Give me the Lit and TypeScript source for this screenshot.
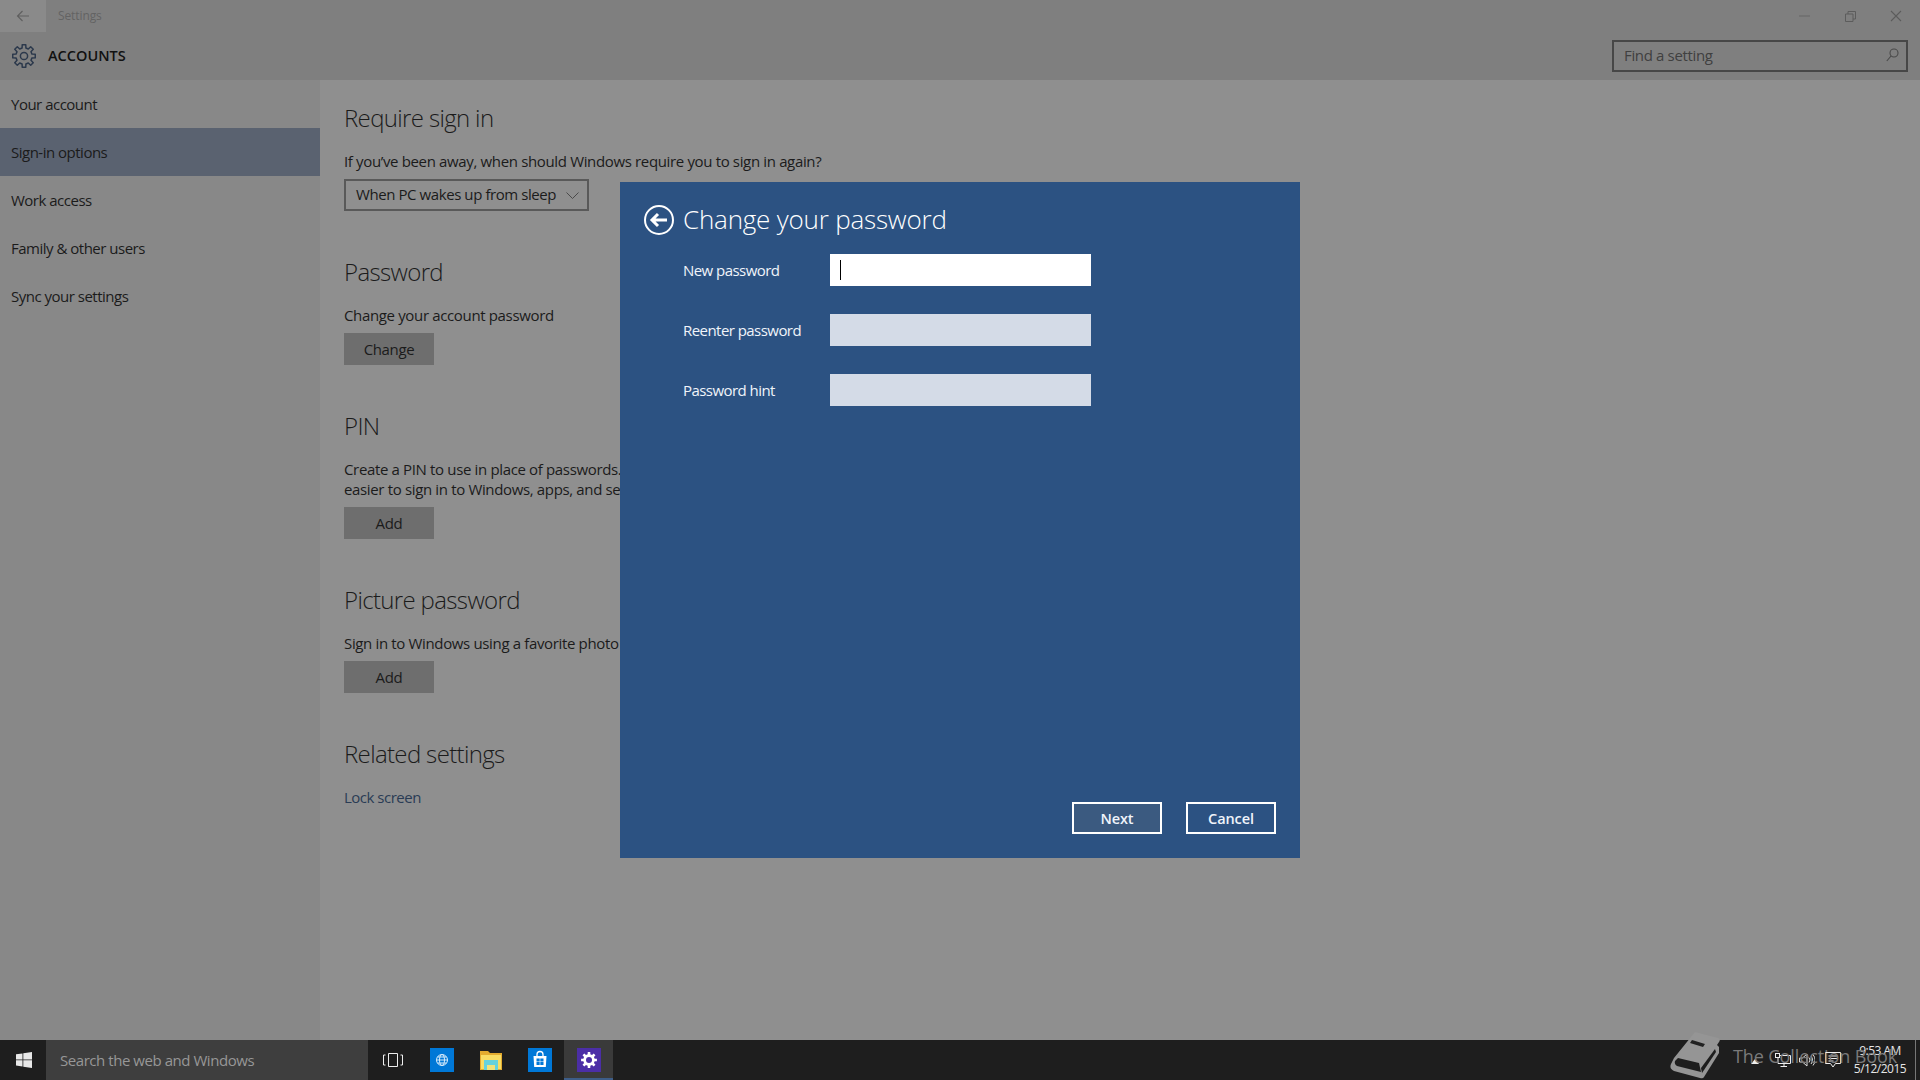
import { LitElement, html, css, svg } from 'lit';
import { customElement } from 'lit/decorators.js';

// builds a toothed gear outline around 12,12
function gearPath(teeth: number, outer: number, inner: number, size = 12) {
  const pts: string[] = [];
  const step = (Math.PI * 2) / teeth;
  for (let i = 0; i < teeth; i++) {
    const a = i * step - Math.PI / 2;
    const add = (r: number, t: number) => {
      pts.push(`${(size + r * Math.cos(a + t * step)).toFixed(2)} ${(size + r * Math.sin(a + t * step)).toFixed(2)}`);
    };
    add(inner, -0.3);
    add(outer, -0.2);
    add(outer, 0.2);
    add(inner, 0.3);
  }
  return `M${pts.join('L')}Z`;
}

const sideItems = ['Your account', 'Sign-in options', 'Work access', 'Family & other users', 'Sync your settings'];

@customElement('app-root')
export class AppRoot extends LitElement {
  static styles = css`
    :host {
      display: flex;
      flex-direction: column;
      position: relative;
      width: 1920px;
      height: 1080px;
      overflow: hidden;
      font-family: 'Open Sans', 'Noto Sans', sans-serif;
      font-size: 15px;
      letter-spacing: -0.35px;
      color: #1b1b1b;
      background: #8f8f8f;
    }
    svg { display: block; flex: none; }

    .titlebar {
      display: flex;
      align-items: center;
      height: 32px;
      background: #7f7f7f;
    }
    .back {
      display: flex;
      align-items: center;
      justify-content: center;
      width: 46px;
      height: 32px;
      background: #8a8a8a;
    }
    .app-title { margin-left: 12px; padding-bottom: 1px; font-size: 12px; color: #636363; letter-spacing: -0.1px; }
    .win-controls { display: flex; margin-left: auto; margin-right: 1px; }
    .win-controls div { display: flex; align-items: center; justify-content: center; width: 46px; height: 32px; }

    .header {
      display: flex;
      align-items: center;
      height: 48px;
      padding: 0 12px;
      background: #7f7f7f;
    }
    .section-name { margin-left: 12px; padding-bottom: 1px; color: #111; font-weight: 600; font-size: 14.5px; letter-spacing: 0; }
    .search {
      display: flex;
      align-items: center;
      justify-content: space-between;
      box-sizing: border-box;
      width: 296px;
      height: 32px;
      margin-left: auto;
      padding: 0 7px 2px 10px;
      border: 2px solid #474747;
      color: #404040;
    }

    .main { display: flex; flex: 1; min-height: 0; }
    .sidebar { width: 320px; background: #888888; letter-spacing: -0.5px; }
    .side-item {
      display: flex;
      align-items: center;
      height: 48px;
      padding-left: 11px;
    }
    .side-item.active { background: #5a6270; }

    .content { flex: 1; padding: 19px 0 0 24px; }
    .block { width: 560px; margin-bottom: 42px; }
    h2 {
      margin: 0 0 14px;
      font-size: 24px;
      font-weight: 300;
      line-height: 38px;
      letter-spacing: -0.65px;
    }
    p { margin: 0; line-height: 20px; }
    .dropdown {
      display: flex;
      align-items: center;
      justify-content: space-between;
      box-sizing: border-box;
      width: 245px;
      height: 32px;
      margin-top: 8px;
      padding: 0 8px 2px 10px;
      border: 2px solid #595959;
      letter-spacing: -0.42px;
    }
    .dropdown svg { margin-top: 2px; }
    .btn {
      display: flex;
      align-items: center;
      justify-content: center;
      width: 90px;
      height: 32px;
      margin-top: 8px;
      background: #6e6e6e;
    }
    .link { color: #2a3c55; letter-spacing: -0.5px; }

    .taskbar {
      display: flex;
      align-items: center;
      height: 40px;
      background: #1e1e1e;
    }
    .start { display: flex; align-items: center; justify-content: center; width: 46px; height: 40px; padding-left: 2px; box-sizing: border-box; }
    .task-search {
      display: flex;
      align-items: center;
      box-sizing: border-box;
      width: 322px;
      height: 40px;
      padding-left: 14px;
      background: #3e3e3e;
      color: #979797;
      letter-spacing: -0.45px;
    }
    .task-icon { display: flex; align-items: center; justify-content: center; width: 49px; height: 40px; box-sizing: border-box; }
    .task-icon.open { background: #3a3a3a; border-bottom: 2px solid #3d5d88; padding-top: 2px; }
    .tray { display: flex; align-items: center; margin-left: auto; height: 40px; }
    .clock {
      display: flex;
      flex-direction: column;
      align-items: center;
      width: 52px;
      margin-left: 13px;
      color: #e6e6e6;
      font-size: 12px;
      line-height: 18px;
      letter-spacing: -0.5px;
    }
    .desk-peek { width: 1px; height: 40px; margin-left: 9px; margin-right: 4px; background: #777; }

    .watermark {
      position: absolute;
      left: 1670px;
      top: 1032px;
      display: flex;
      align-items: center;
      height: 48px;
      color: #7a7a7a;
      font-size: 18px;
      letter-spacing: -0.1px;
      pointer-events: none;
    }
    .watermark span { margin-left: 13px; }

    .dialog {
      position: absolute;
      left: 620px;
      top: 182px;
      display: flex;
      flex-direction: column;
      box-sizing: border-box;
      width: 680px;
      height: 676px;
      padding: 18px 24px 24px 24px;
      background: #2c5282;
      color: #f0f4fa;
    }
    .dialog-head { display: flex; align-items: center; height: 40px; gap: 9px; margin-bottom: 14px; }
    .dialog-head h1 { margin: 0 0 2px; font-size: 26px; font-weight: 300; letter-spacing: -0.2px; color: #fff; }
    .form {
      display: grid;
      grid-template-columns: 147px 261px;
      grid-auto-rows: 32px;
      row-gap: 28px;
      align-items: center;
      margin-left: 39px;
      letter-spacing: -0.55px;
    }
    .field { height: 32px; background: #d4dbe7; }
    .field.focus { position: relative; background: #fff; }
    .caret { position: absolute; left: 10px; top: 6px; width: 1px; height: 20px; background: #000; }
    .footer { display: flex; justify-content: flex-end; gap: 24px; margin-top: auto; }
    .dlg-btn {
      display: flex;
      align-items: center;
      justify-content: center;
      box-sizing: border-box;
      width: 90px;
      height: 32px;
      border: 2px solid #fff;
      font-weight: 600;
      letter-spacing: -0.1px;
      font-size: 14.5px;
    }
    .dlg-btn.primary { background: #3b5a80; }
  `;

  gear() {
    return html`<svg width="24" height="24" viewBox="0 0 24 24" fill="none" stroke="#2c394c" stroke-width="1.5" stroke-linejoin="round">
      <path d=${gearPath(8, 11.4, 8.2)}></path><circle cx="12" cy="12" r="3.6"></circle>
    </svg>`;
  }

  titlebar() {
    return html`<div class="titlebar">
      <div class="back">
        <svg width="14" height="12" viewBox="0 0 14 12" fill="none" stroke="#5f5f5f" stroke-width="1.1"><path d="M13 6H1.5M6.5 1 1.5 6l5 5"></path></svg>
      </div>
      <div class="app-title">Settings</div>
      <div class="win-controls">
        <div><svg width="11" height="2"><path d="M0 1h11" stroke="#666" stroke-width="1"></path></svg></div>
        <div><svg width="11" height="11" viewBox="0 0 11 11" fill="none" stroke="#5c5c5c"><path d="M.5 3h7.5v7.5H.5zM3 3V.5h7.5V8H8"></path></svg></div>
        <div><svg width="12" height="12" viewBox="0 0 12 12" stroke="#5c5c5c" stroke-width="1.1"><path d="M1 1l10 10M11 1 1 11"></path></svg></div>
      </div>
    </div>`;
  }

  header() {
    return html`<div class="header">
      ${this.gear()}
      <div class="section-name">ACCOUNTS</div>
      <div class="search">
        <span>Find a setting</span>
        <svg width="13" height="14" viewBox="0 0 13 14" fill="none" stroke="#4a4a4a" stroke-width="1.1"><circle cx="8" cy="5" r="4"></circle><path d="M5 8 .8 13"></path></svg>
      </div>
    </div>`;
  }

  content() {
    return html`<div class="content">
      <div class="block">
        <h2>Require sign in</h2>
        <p>If you’ve been away, when should Windows require you to sign in again?</p>
        <div class="dropdown">
          <span>When PC wakes up from sleep</span>
          <svg width="13" height="7" viewBox="0 0 13 7" fill="none" stroke="#4a4a4a"><path d="M.5.5l6 6 6-6"></path></svg>
        </div>
      </div>
      <div class="block">
        <h2>Password</h2>
        <p>Change your account password</p>
        <div class="btn">Change</div>
      </div>
      <div class="block">
        <h2>PIN</h2>
        <p>Create a PIN to use in place of passwords. Having a PIN makes it<br />easier to sign in to Windows, apps, and services.</p>
        <div class="btn">Add</div>
      </div>
      <div class="block">
        <h2>Picture password</h2>
        <p>Sign in to Windows using a favorite photo</p>
        <div class="btn">Add</div>
      </div>
      <div class="block">
        <h2>Related settings</h2>
        <p class="link">Lock screen</p>
      </div>
    </div>`;
  }

  taskbar() {
    return html`<div class="taskbar">
      <div class="start">
        <svg width="16" height="16" viewBox="0 0 16 16" fill="#e8e8e8"><path d="M0 2.300 6.500 1.400V7.500H0zM7.300 1.300 16 0V7.500H7.300zM0 8.300H6.500V14.500L0 13.600zM7.300 8.300H16V16L7.300 14.700z"></path></svg>
      </div>
      <div class="task-search">Search the web and Windows</div>
      <div class="task-icon">
        <svg width="20" height="14" viewBox="0 0 20 14" fill="none" stroke="#eee"><path d="M5.500.5h9v13h-9zM2.500 2H.5v10h2M17.500 2h2v10h-2"></path></svg>
      </div>
      <div class="task-icon">
        <svg width="24" height="24" viewBox="0 0 24 24" fill="none"><rect width="24" height="24" fill="#0078d7"></rect><g stroke="#d7ebfb" stroke-width="1"><circle cx="12" cy="12" r="5.500"></circle><ellipse cx="12" cy="12" rx="2.500" ry="5.500"></ellipse><path d="M6.500 12h11M7.500 9h9M7.500 15h9"></path></g></svg>
      </div>
      <div class="task-icon">
        <svg width="22" height="19" viewBox="0 0 22 19"><path d="M0 0h8l2 2h12v17H0z" fill="#e3ab2f"></path><path d="M1 4h20v14H1z" fill="#f8dc63"></path><path d="M4 9h14v10h-3v-5H7v5H4z" fill="#65d2dc"></path><path d="M7 14h8v5H7z" fill="#f0e27a"></path></svg>
      </div>
      <div class="task-icon">
        <svg width="24" height="24" viewBox="0 0 24 24"><rect width="24" height="24" fill="#0078d7"></rect><path d="M5.500 8h13l-.7 11H6.200z" fill="#fff"></path><path d="M9 9V6.500a3 3 0 0 1 6 0V9" fill="none" stroke="#fff" stroke-width="1.300"></path><path d="M8.500 10.500h3.200v3H8.500zM12.300 10.500h3.200v3h-3.200zM8.500 14h3.200v3H8.500zM12.300 14h3.200v3h-3.200z" fill="#0078d7"></path></svg>
      </div>
      <div class="task-icon open">
        <svg width="24" height="24" viewBox="0 0 24 24"><rect width="24" height="24" fill="#4b2ea6"></rect><path d=${gearPath(8, 8, 5.8)} fill="#fff"></path><circle cx="12" cy="12" r="3" fill="#4b2ea6"></circle></svg>
      </div>
      <div class="tray">
        <svg width="8" height="5" viewBox="0 0 8 5" style="margin-top:2px"><path d="M0 5 4 0l4 5z" fill="#eee"></path></svg>
        <svg width="16" height="14" viewBox="0 0 16 14" fill="none" stroke="#eee" style="margin-left:16px"><path d="M3 2.500h12.500v8H3zM9 10.500v3M5.500 13.500H12"></path><rect x=".5" y=".5" width="4" height="4" fill="#1e1e1e"></rect></svg>
        <svg width="16" height="14" viewBox="0 0 16 14" fill="none" stroke="#ddd" style="margin-left:8px"><path d="M.5 5h3L8 1v12L3.500 9h-3zM10 4.500a4 4 0 0 1 0 5M12 3a6.500 6.500 0 0 1 0 8M14 1.500a9 9 0 0 1 0 11"></path></svg>
        <svg width="16" height="16" viewBox="0 0 16 16" fill="none" stroke="#eee" style="margin-left:10px"><path d="M.5.500h15v11h-5L8 15l-2.500-3.500h-5zM3.500 4h9M3.500 6.500h9M3.500 9h5"></path></svg>
        <div class="clock"><span>9:53 AM</span><span>5/12/2015</span></div>
        <div class="desk-peek"></div>
      </div>
    </div>`;
  }

  render() {
    return html`
      ${this.titlebar()}
      ${this.header()}
      <div class="main">
        <div class="sidebar">
          ${sideItems.map((s, i) => html`<div class="side-item ${i === 1 ? 'active' : ''}">${s}</div>`)}
        </div>
        ${this.content()}
      </div>
      ${this.taskbar()}

      <div class="watermark">
        <svg width="50" height="48" viewBox="0 0 50 48">
          ${svg`<path d="M25 0 48 6Q51 7 49 10L47 13 49 15V21L34 45Q33 47 30 46L4 39Q-1 37 1 32L4 26z" fill="#959595"></path>
          <path d="M5 29 8 26 29 31 31 40 7 34Q4 32 5 29z" fill="#1e1e1e"></path>
          <path d="M45 17 46 20 32 41 31 36z" fill="#1e1e1e"></path>
          <path d="M22 8 35 12 33 15 20 11z" fill="#222"></path>`}
        </svg>
        <span>The Collection Book</span>
      </div>

      <div class="dialog">
        <div class="dialog-head">
          <svg width="30" height="30" viewBox="0 0 30 30" fill="none" stroke="#fff"><circle cx="15" cy="15" r="14" stroke-width="2"></circle><path d="M23 15H8M14 9l-6 6 6 6" stroke-width="3"></path></svg>
          <h1>Change your password</h1>
        </div>
        <div class="form">
          <div>New password</div>
          <div class="field focus"><div class="caret"></div></div>
          <div>Reenter password</div>
          <div class="field"></div>
          <div>Password hint</div>
          <div class="field"></div>
        </div>
        <div class="footer">
          <div class="dlg-btn primary">Next</div>
          <div class="dlg-btn">Cancel</div>
        </div>
      </div>
    `;
  }
}
